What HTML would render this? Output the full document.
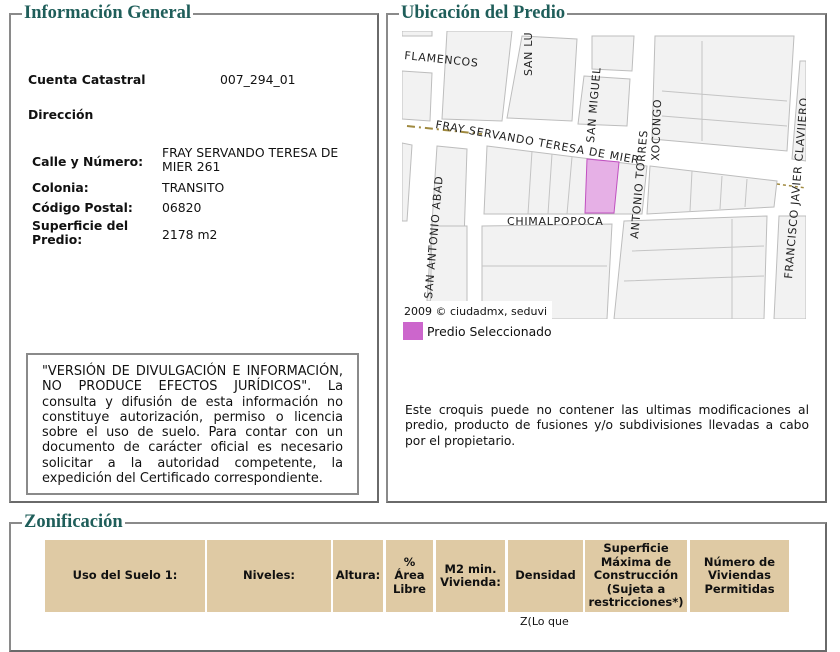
<!DOCTYPE html>
<html><head><meta charset="utf-8"><style>
body{margin:0;width:840px;height:630px;background:#fff;position:relative;overflow:hidden;font-family:"DejaVu Sans","Liberation Sans",sans-serif;font-size:12px;color:#111}
.box{position:absolute;border:2px solid #8a8a8a;border-right-color:#6a6a6a;border-bottom-color:#6a6a6a;box-sizing:border-box}
.lg{position:absolute;top:-13px;background:#fff;padding:0 2px;font-family:"Liberation Serif",serif;font-weight:bold;font-size:18.5px;color:#1f5e5a;line-height:22px}
.a{position:absolute;white-space:nowrap}
.th{position:absolute;top:540px;height:72px;background:#dfcaa4;display:flex;align-items:center;justify-content:center;text-align:center;font-weight:bold;font-size:11.5px;line-height:13.5px}
</style></head><body>
<div class="box" style="left:9px;top:13px;width:370px;height:490px"><div class="lg" style="left:11px">Información General</div></div>
<div class="box" style="left:386px;top:13px;width:441px;height:490px"><div class="lg" style="left:11px">Ubicación del Predio</div></div>
<div class="box" style="left:9px;top:522px;width:818px;height:130px"><div class="lg" style="left:11px">Zonificación</div></div>

<div class="a" style="left:28px;top:72px;font-weight:bold;font-size:12.4px">Cuenta Catastral</div>
<div class="a" style="left:220px;top:72px;font-size:12.4px">007_294_01</div>
<div class="a" style="left:28px;top:107px;font-weight:bold;font-size:12.4px">Dirección</div>
<div class="a" style="left:32px;top:154px;font-weight:bold;font-size:12.4px">Calle y Número:</div>
<div class="a" style="left:162px;top:146px;line-height:14px;font-size:12.4px">FRAY SERVANDO TERESA DE<br>MIER 261</div>
<div class="a" style="left:32px;top:180px;font-weight:bold;font-size:12.4px">Colonia:</div>
<div class="a" style="left:162px;top:180px;font-size:12.4px">TRANSITO</div>
<div class="a" style="left:32px;top:200px;font-weight:bold;font-size:12.4px">Código Postal:</div>
<div class="a" style="left:162px;top:200px;font-size:12.4px">06820</div>
<div class="a" style="left:32px;top:219px;font-weight:bold;line-height:14px;font-size:12.4px">Superficie del<br>Predio:</div>
<div class="a" style="left:162px;top:227px;font-size:12.4px">2178 m2</div>

<div style="position:absolute;left:26px;top:353px;width:333px;height:142px;border:2px solid #8a8a8a;box-sizing:border-box;padding:9px 14px 0 14px;font-size:12.9px;line-height:15.3px;text-align:justify">"VERSIÓN DE DIVULGACIÓN E INFORMACIÓN, NO PRODUCE EFECTOS JURÍDICOS". La consulta y difusión de esta información no constituye autorización, permiso o licencia sobre el uso de suelo. Para contar con un documento de carácter oficial es necesario solicitar a la autoridad competente, la expedición del Certificado correspondiente.</div>

<svg style="position:absolute;left:402px;top:31px" width="404" height="288" viewBox="0 0 404 288">
<rect width="404" height="288" fill="#fff"/>
<g fill="#f2f2f2" stroke="#bdbdbd" stroke-width="1">
<polygon points="0,0 30,0 30,5 0,5"/>
<polygon points="0,40 30,42 28,90 0,88"/>
<polygon points="45,0 110,0 100,90 40,88"/>
<polygon points="120,5 175,8 170,90 105,87"/>
<polygon points="190,5 232,5 230,40 190,38"/>
<polygon points="182,45 228,48 225,95 176,93"/>
<polygon points="253,5 392,5 385,120 250,108"/>
<polygon points="398,30 404,30 404,130 390,128"/>
<polygon points="0,112 10,114 5,190 0,190"/>
<polygon points="35,115 65,118 60,270 25,270"/>
<polygon points="85,115 245,135 240,183 82,183"/>
<polygon points="248,135 375,150 372,176 245,183"/>
<polygon points="80,195 210,193 205,288 80,288"/>
<polygon points="222,190 365,185 362,288 212,288"/>
<polygon points="30,195 65,195 65,288 28,288"/>
<polygon points="377,185 404,185 404,288 372,288"/>
</g>
<g stroke="#c4c4c4" fill="none">
<path d="M130,120 L126,183 M150,123 L146,183 M170,126 L165,183 M290,140 L288,180 M320,145 L318,178 M345,148 L343,176 M300,10 L300,110 M260,60 L385,70 M260,85 L385,95 M80,235 L205,235 M230,220 L362,215 M222,250 L362,245 M330,188 L330,288"/>
</g>
<polygon points="185,128 217,131 212,182 183,182" fill="#e6b0e6" stroke="#c050c0"/>
<path d="M5,95 L80,103" stroke="#a08a40" stroke-width="2" stroke-dasharray="8,4,2,4"/>
<path d="M375,153 L404,157" stroke="#a08a40" stroke-width="1.5" stroke-dasharray="3,3"/>
<g font-family="DejaVu Sans,sans-serif" font-size="11" fill="#222" letter-spacing="0.7">
<text x="2" y="28" transform="rotate(6 2 28)">FLAMENCOS</text>
<text x="33" y="97" transform="rotate(10 33 97)">FRAY SERVANDO TERESA DE MIER</text>
<text x="105" y="194">CHIMALPOPOCA</text>
<text x="130" y="45" transform="rotate(-90 130 45)">SAN LU</text>
<text x="192" y="112" transform="rotate(-85 192 112)">SAN MIGUEL</text>
<text x="30" y="268" transform="rotate(-85 30 268)">SAN ANTONIO ABAD</text>
<text x="236" y="208" transform="rotate(-85 236 208)">ANTONIO TORRES</text>
<text x="257" y="130" transform="rotate(-88 257 130)">XOCONGO</text>
<text x="390" y="248" transform="rotate(-85 390 248)">FRANCISCO JAVIER CLAVIJERO</text>
</g>
<rect x="0" y="270" width="150" height="18" fill="#fff"/>
<text x="2" y="284" font-family="DejaVu Sans,sans-serif" font-size="11" fill="#111">2009 © ciudadmx, seduvi</text>
</svg>
<div style="position:absolute;left:403px;top:322px;width:20px;height:18px;background:#cc66cc"></div>
<div class="a" style="left:427px;top:324px;font-size:12.4px">Predio Seleccionado</div>

<div style="position:absolute;left:405px;top:403px;width:404px;line-height:15.3px;font-size:12.3px;text-align:justify">Este croquis puede no contener las ultimas modificaciones al predio, producto de fusiones y/o subdivisiones llevadas a cabo por el propietario.</div>

<div class="th" style="left:45px;width:160px">Uso del Suelo 1:</div>
<div class="th" style="left:207px;width:124px">Niveles:</div>
<div class="th" style="left:333px;width:50px">Altura:</div>
<div class="th" style="left:386px;width:47px">%<br>Área<br>Libre</div>
<div class="th" style="left:436px;width:69px">M2 min.<br>Vivienda:</div>
<div class="th" style="left:508px;width:75px">Densidad</div>
<div class="th" style="left:585px;width:102px">Superficie<br>Máxima de<br>Construcción<br>(Sujeta a<br>restricciones*)</div>
<div class="th" style="left:690px;width:99px">Número de<br>Viviendas<br>Permitidas</div>
<div class="a" style="left:520px;top:615px;font-size:11px">Z(Lo que</div>
</body></html>
